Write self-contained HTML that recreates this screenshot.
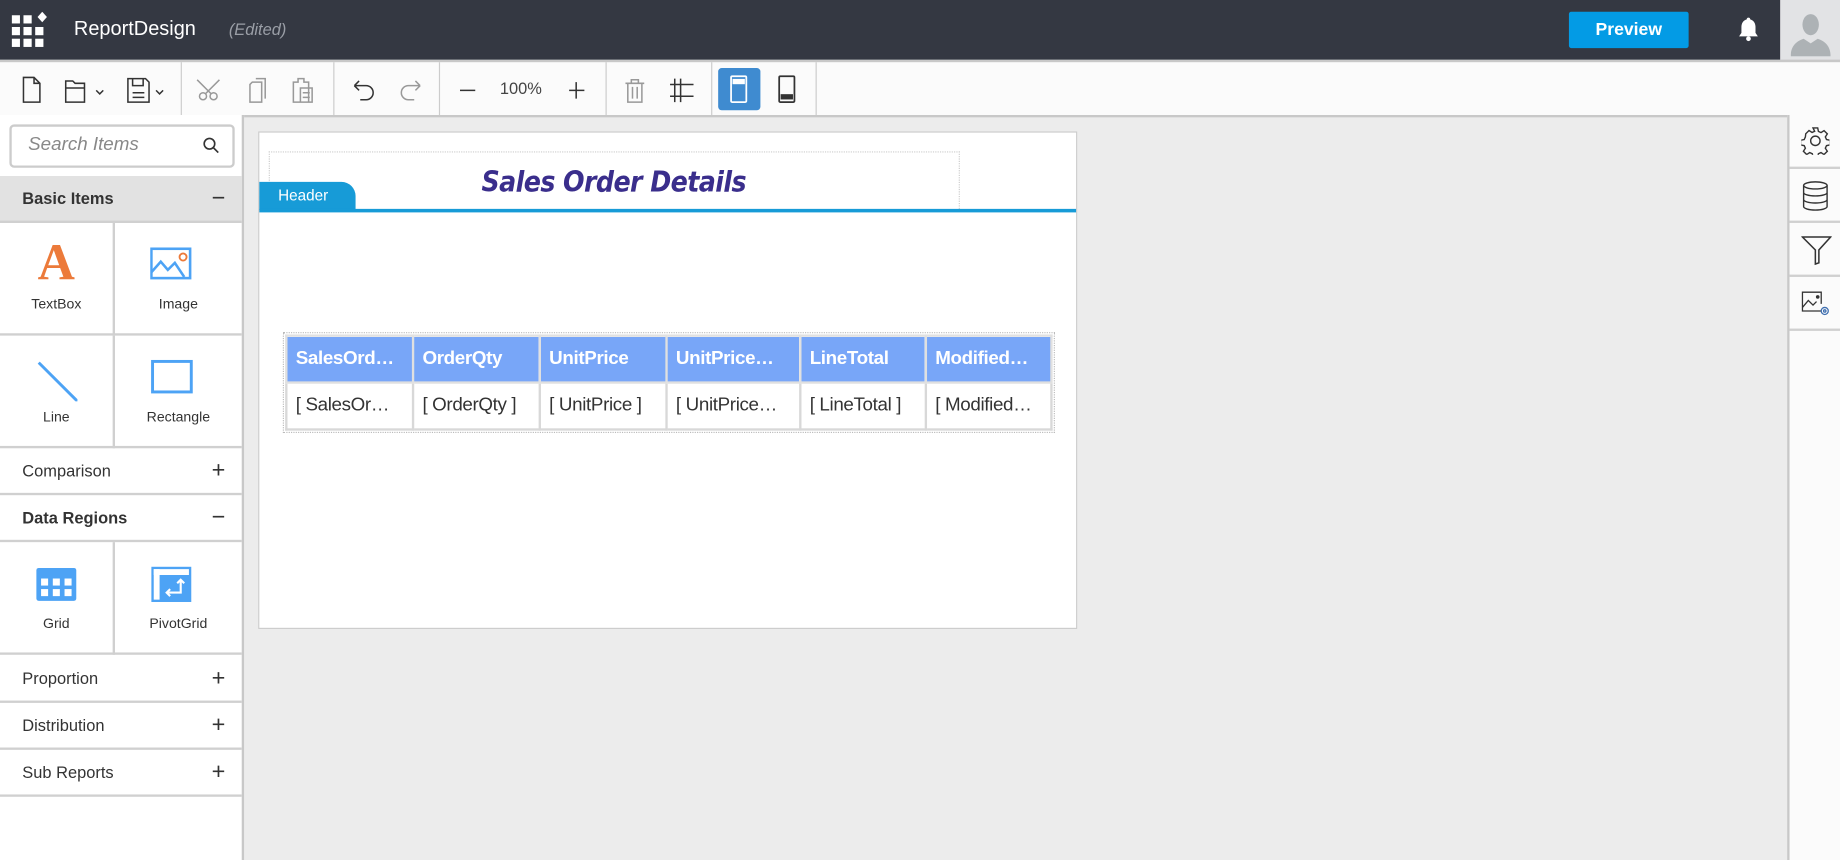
<!DOCTYPE html>
<html><head><meta charset="utf-8"><style>
html,body{margin:0;padding:0;width:1840px;height:860px;overflow:hidden;background:#fff}
#w{position:absolute;left:0;top:0;width:1568px;height:733px;transform:scale(1.17347);transform-origin:0 0;font-family:"Liberation Sans",sans-serif;color:#333;background:#ececec}
.a{position:absolute}
.top{left:0;top:0;width:1568px;height:51px;background:#343842}
.tb{left:0;top:51px;width:1568px;height:45px;background:#fbfbfb;border-top:2px solid #c8c8c8;border-bottom:2px solid #c8c8c8}
.sep{top:0;width:1px;height:45px;background:#ccc}
.lp{left:0;top:98px;width:206px;height:635px;background:#fff;border-right:2px solid #c8c8c8}
.row{position:absolute;left:0;width:206px;height:38px;border-bottom:2px solid #d0d0d0;font-size:14px;line-height:38px;text-indent:19px;color:#333}
.row b{font-weight:bold}
.pm{position:absolute;right:14px;top:0;font-size:20px;text-indent:0}
.cell{position:absolute;width:96px;height:94px;border-right:2px solid #d0d0d0;border-bottom:2px solid #d0d0d0;text-align:center;font-size:12px;color:#333}
.cell span{position:absolute;left:0;right:0;top:62px}
.cell svg{position:absolute;left:30px;top:20px}
.rp{left:1523px;top:98px;width:45px;height:635px;background:#fbfbfb;border-left:2px solid #c8c8c8}
.rb{position:absolute;left:0;width:43px;height:44px;border-bottom:2px solid #d0d0d0}
.rb svg{position:absolute;left:10px;top:10px}
table{border-collapse:collapse;table-layout:fixed}
td{border:2px solid #d8d8d8;padding:0 7px;white-space:nowrap;overflow:hidden;height:38px;font-size:16px;letter-spacing:-0.3px}
tr.h td{background:#78a6f8;color:#fff;font-weight:bold;border-color:#e0e0e0}
</style></head><body><div id="w">
<div class="a top">
 <svg class="a" style="left:10px;top:10px" width="32" height="32" viewBox="0 0 32 32" fill="#fff">
  <rect x="0" y="3" width="7" height="7"/><rect x="10" y="3" width="7" height="7"/>
  <rect x="0" y="13" width="7" height="7"/><rect x="10" y="13" width="7" height="7"/><rect x="20" y="13" width="7" height="7"/>
  <rect x="0" y="23" width="7" height="7"/><rect x="10" y="23" width="7" height="7"/><rect x="20" y="23" width="7" height="7"/>
  <path d="M26 0 L30 4.5 L26 9 L22 4.5Z"/></svg>
 <div class="a" style="left:63px;top:15px;color:#fff;font-size:17px">ReportDesign</div>
 <div class="a" style="left:195px;top:17px;color:#9a9ea6;font-size:14px;font-style:italic">(Edited)</div>
 <div class="a" style="left:1337px;top:10px;width:102px;height:31px;background:#039be5;border-radius:2px;color:#fff;font-weight:bold;font-size:15px;text-align:center;line-height:31px">Preview</div>
 <svg class="a" style="left:1480px;top:14px" width="20" height="22" viewBox="0 0 20 22" fill="#fff"><path d="M10 1c-1 0-1.5.7-1.5 1.5C5.5 3.3 4 6 4 9v5l-2 3h16l-2-3V9c0-3-1.5-5.7-4.5-6.5C11.5 1.7 11 1 10 1z"/><circle cx="10" cy="19" r="2"/></svg>
 <div class="a" style="left:1517px;top:0;width:51px;height:51px;background:#e2e3e5">
  <svg class="a" style="left:9px;top:11px" width="34" height="37" viewBox="0 0 34 37" fill="#adb2b5"><ellipse cx="17" cy="10" rx="7" ry="9"/><path d="M0 37 C0 28 5 24 11 22 L17 26 L23 22 C29 24 34 28 34 37Z"/></svg>
 </div>
</div>
<div class="a tb">
 <div class="a sep" style="left:154px"></div><div class="a sep" style="left:284px"></div><div class="a sep" style="left:374px"></div><div class="a sep" style="left:516px"></div><div class="a sep" style="left:606px"></div><div class="a sep" style="left:695px"></div>
 <svg class="a" style="left:0;top:0" width="700" height="45" fill="none" stroke="#333" stroke-width="1.3">
  <path d="M20 13h9l5 5v16H20z M29 13v5h5"/>
  <path d="M56 16h6l2 2h8v16H56z M56 22h16"/><path d="M82 24l3 3 3-3"/>
  <path d="M109 14h15l3 3v17h-18z M113 14v6h9v-6 M113 26h10 M113 30h10"/><path d="M133 24l3 3 3-3"/>
  <g stroke="#999"><circle cx="173" cy="29" r="3"/><circle cx="182" cy="29" r="3"/><path d="M175 27l12-12 M180 27l-12-12"/>
  <path d="M215 17h8v17h-10V19z M218 14h8v17"/>
  <path d="M250 17h4v-3h5v3h4v17h-13z M256 22h10v12h-10z M258 26h6 M258 30h6"/></g>
  <path d="M302 20h10a6 6 0 010 12h-5 M302 20l4-4 M302 20l4 4"/>
  <g stroke="#999"><path d="M358 20h-10a6 6 0 000 12h5 M358 20l-4-4 M358 20l-4 4"/></g>
  <path d="M392 24h13 M485 24h13 M491 17v14"/>
  <g stroke="#999"><path d="M533 18h16 M538 18v-3h6v3 M535 18v16h12V18 M539 21v10 M543 21v10"/></g>
  <path d="M575 14v20 M580 14v20 M571 19h20 M571 29h20"/>
 </svg>
 <div class="a" style="left:426px;top:14px;font-size:14px;color:#444">100%</div>
 <div class="a" style="left:612px;top:5px;width:36px;height:36px;background:#3f8bd0;border-radius:3px">
  <svg width="36" height="36" fill="none" stroke="#fff" stroke-width="1.5"><rect x="11" y="7" width="13" height="22" rx="1"/><rect x="13" y="10" width="9" height="3" fill="#fff"/></svg></div>
 <svg class="a" style="left:653px;top:5px" width="36" height="36" fill="none" stroke="#333" stroke-width="1.5"><rect x="11" y="7" width="13" height="22" rx="1"/><rect x="13" y="23" width="9" height="3" fill="#333"/></svg>
</div>
<div class="a lp">
 <div class="a" style="left:8px;top:8px;width:188px;height:33px;border:2px solid #ccc;border-radius:4px;background:#fff">
  <div class="a" style="left:14px;top:7px;font-size:16px;font-style:italic;color:#888">Search Items</div>
  <svg class="a" style="left:162px;top:8px" width="16" height="16" fill="none" stroke="#333" stroke-width="1.4"><circle cx="6.5" cy="6.5" r="4.5"/><path d="M10 10l4 4"/></svg>
 </div>
 <div class="row" style="top:52px;background:#e2e2e2"><b>Basic Items</b><span class="pm">−</span></div>
 <div class="cell" style="left:0;top:92px"><div class="a" style="left:0;right:0;top:10px;font-family:'Liberation Serif',serif;font-weight:bold;font-size:44px;color:#ec7a3a;line-height:48px">A</div><span>TextBox</span></div>
 <div class="cell" style="left:98px;top:92px;width:108px;border-right:0"><svg width="36" height="30" viewBox="0 0 36 30" style="left:30px" fill="none" stroke="#4da3f5" stroke-width="2.2"><rect x="1" y="2" width="33" height="25"/><path d="M1 22l8-9 6 7 6-6 8 12"/><circle cx="28" cy="9" r="3" stroke="#ec7a3a" stroke-width="1.6"/></svg><span>Image</span></div>
 <div class="cell" style="left:0;top:188px"><svg width="36" height="36"><path d="M3 3L36 36" stroke="#4da3f5" stroke-width="2.5"/></svg><span>Line</span></div>
 <div class="cell" style="left:98px;top:188px;width:108px;border-right:0"><svg width="38" height="30" style="left:30px"><rect x="2" y="2" width="33" height="26" fill="none" stroke="#4da3f5" stroke-width="2.5"/></svg><span>Rectangle</span></div>
 <div class="row" style="top:284px">Comparison<span class="pm">+</span></div>
 <div class="row" style="top:324px"><b>Data Regions</b><span class="pm">−</span></div>
 <div class="cell" style="left:0;top:364px"><svg width="36" height="32" viewBox="0 0 36 32"><rect x="1" y="2" width="34" height="28" rx="2" fill="#4da3f5"/><g fill="#fff"><rect x="5" y="11" width="6" height="6"/><rect x="15" y="11" width="6" height="6"/><rect x="25" y="11" width="6" height="6"/><rect x="5" y="20" width="6" height="6"/><rect x="15" y="20" width="6" height="6"/><rect x="25" y="20" width="6" height="6"/></g></svg><span>Grid</span></div>
 <div class="cell" style="left:98px;top:364px;width:108px;border-right:0"><svg width="36" height="32" viewBox="0 0 36 32" style="left:30px"><rect x="1" y="1" width="34" height="30" fill="#4da3f5"/><rect x="3" y="3" width="30" height="5" fill="#fff"/><rect x="3" y="3" width="5" height="26" fill="#fff"/><path d="M26 12v11h-12 M23 15l3-3 3 3 M17 20l-3 3 3 3" fill="none" stroke="#fff" stroke-width="1.8"/></svg><span>PivotGrid</span></div>
 <div class="row" style="top:461px">Proportion<span class="pm">+</span></div>
 <div class="row" style="top:501px">Distribution<span class="pm">+</span></div>
 <div class="row" style="top:541px">Sub Reports<span class="pm">+</span></div>
</div>
<div class="a" style="left:220px;top:112px;width:696px;height:422px;background:#fff;border:1px solid #ccc">
 <div class="a" style="left:8px;top:16px;width:587px;height:50px;border:1px dotted #ccc;border-bottom:0"></div>
 <div class="a" style="left:0;top:28px;width:604px;text-align:center;font-size:24px;font-weight:bold;font-style:italic;color:#3a2e8c;font-family:'DejaVu Sans Condensed','Liberation Sans',sans-serif;letter-spacing:-0.5px">Sales Order Details</div>
 <div class="a" style="left:0;top:42px;width:82px;height:24px;background:#179bd7;border-radius:0 12px 0 0;color:#fff;font-size:13px;line-height:24px;text-indent:16px">Header</div>
 <div class="a" style="left:0;top:65px;width:696px;height:3px;background:#179bd7"></div>
 <div class="a" style="left:20px;top:170px;border:1px dotted #bbb;padding:1px">
  <table><colgroup><col style="width:108px"><col style="width:108px"><col style="width:108px"><col style="width:114px"><col style="width:107px"><col style="width:107px"></colgroup>
  <tr class="h"><td>SalesOrd…</td><td>OrderQty</td><td>UnitPrice</td><td>UnitPrice…</td><td>LineTotal</td><td>Modified…</td></tr>
  <tr><td>[ SalesOr…</td><td>[ OrderQty ]</td><td>[ UnitPrice ]</td><td>[ UnitPrice…</td><td>[ LineTotal ]</td><td>[ Modified…</td></tr>
  </table></div>
</div>
<div class="a rp">
 <div class="rb" style="top:0"><svg width="24" height="24" viewBox="0 0 24 24" fill="none" stroke="#333" stroke-width="1.2"><path d="M10 1h4l.6 3 2.2 1 2.6-1.7 2.8 2.8-1.7 2.6 1 2.2 3 .6v4l-3 .6-1 2.2 1.7 2.6-2.8 2.8-2.6-1.7-2.2 1-.6 3h-4l-.6-3-2.2-1-2.6 1.7-2.8-2.8 1.7-2.6-1-2.2-3-.6v-4l3-.6 1-2.2L3.8 6l2.8-2.8 2.6 1.7 2.2-1z"/><circle cx="12" cy="12" r="4"/></svg></div>
 <div class="rb" style="top:46px"><svg width="24" height="26" viewBox="0 0 24 26" fill="none" stroke="#333" stroke-width="1.2"><ellipse cx="12" cy="4" rx="10" ry="3"/><path d="M2 4v18c0 1.7 4.5 3 10 3s10-1.3 10-3V4 M2 10c0 1.7 4.5 3 10 3s10-1.3 10-3 M2 16c0 1.7 4.5 3 10 3s10-1.3 10-3"/></svg></div>
 <div class="rb" style="top:92px"><svg width="26" height="26" viewBox="0 0 26 26" fill="none" stroke="#333" stroke-width="1.3"><path d="M1 2h24L15 13v11l-3 1V13z"/></svg></div>
 <div class="rb" style="top:138px"><svg width="26" height="26" viewBox="0 0 26 26" fill="none" stroke="#333" stroke-width="1.1"><path d="M17 19H1V3h16v10"/><path d="M1 16l5-6 4 4 3-3"/><circle cx="14" cy="7" r="1" fill="#333"/><circle cx="20" cy="19" r="3" stroke="#3f6fb0"/><circle cx="20" cy="19" r="1" stroke="#3f6fb0"/></svg></div>
</div>
</div></body></html>
